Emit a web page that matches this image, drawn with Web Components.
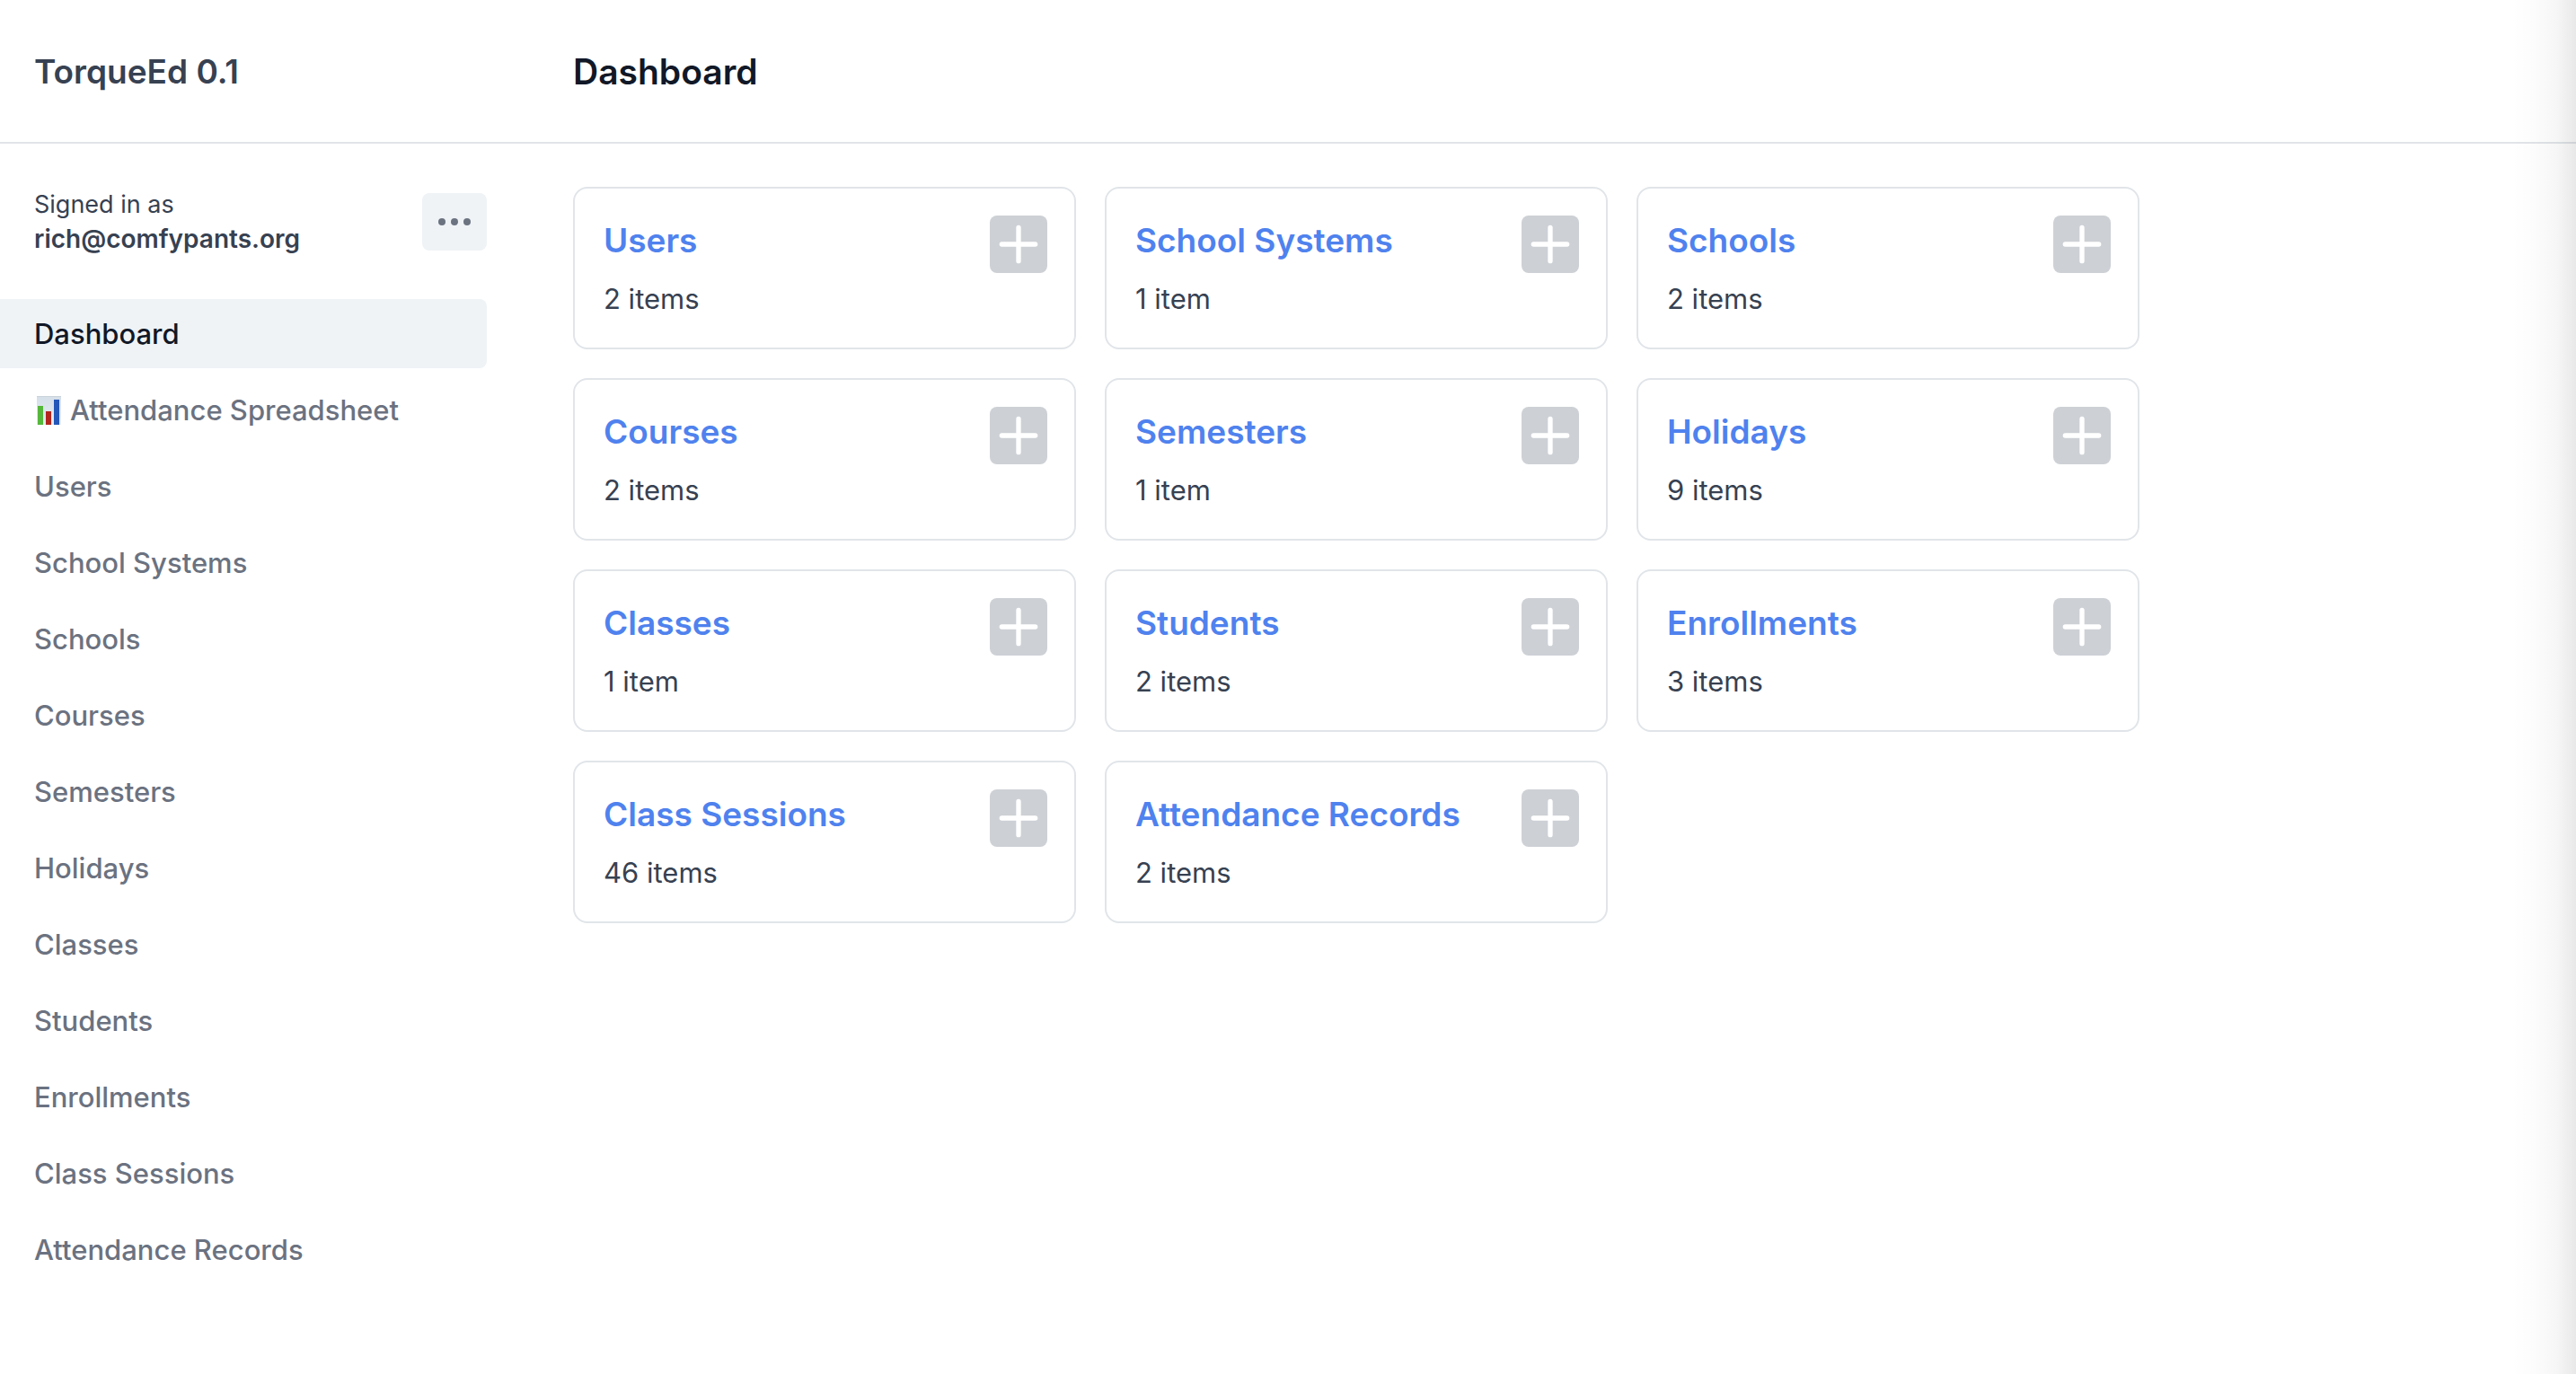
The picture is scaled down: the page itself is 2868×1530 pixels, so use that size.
<!DOCTYPE html>
<html lang="en">
<head>
<meta charset="utf-8">
<title>Dashboard - TorqueEd</title>
<style>
html, body { margin: 0; min-height: 100%; }
body {
  --border: #e1e5e9;
  --tone: #eff3f6;
  --strong: #111827;
  --text: #374151;
  --dim: #6b7280;
  --link: #4f82ee;
  --plus: #cdd0d5;
  background: #fff;
  color: var(--text);
  font: 400 31px/45px Inter, "Liberation Sans", sans-serif;
}
</style>
</head>
<body>
<admin-shell>
  <span slot="brand">TorqueEd 0.1</span>
  <h1 slot="title">Dashboard</h1>
  <signed-in slot="side" email="rich@comfypants.org"></signed-in>
  <side-nav slot="side">
    <nav-link current>Dashboard</nav-link>
    <nav-link><chart-icon></chart-icon>Attendance Spreadsheet</nav-link>
    <nav-link>Users</nav-link>
    <nav-link>School Systems</nav-link>
    <nav-link>Schools</nav-link>
    <nav-link>Courses</nav-link>
    <nav-link>Semesters</nav-link>
    <nav-link>Holidays</nav-link>
    <nav-link>Classes</nav-link>
    <nav-link>Students</nav-link>
    <nav-link>Enrollments</nav-link>
    <nav-link>Class Sessions</nav-link>
    <nav-link>Attendance Records</nav-link>
  </side-nav>
  <card-grid>
    <list-card name="Users">2 items</list-card>
    <list-card name="School Systems">1 item</list-card>
    <list-card name="Schools">2 items</list-card>
    <list-card name="Courses">2 items</list-card>
    <list-card name="Semesters">1 item</list-card>
    <list-card name="Holidays">9 items</list-card>
    <list-card name="Classes">1 item</list-card>
    <list-card name="Students">2 items</list-card>
    <list-card name="Enrollments">3 items</list-card>
    <list-card name="Class Sessions">46 items</list-card>
    <list-card name="Attendance Records">2 items</list-card>
  </card-grid>
</admin-shell>
<script>
const define = (name, html) => customElements.define(name, class extends HTMLElement {
  constructor() {
    super();
    this.attachShadow({ mode: "open" }).innerHTML = html;
  }
  connectedCallback() {
    for (const el of this.shadowRoot.querySelectorAll("[data-text]"))
      el.textContent = this.getAttribute(el.dataset.text);
    for (const el of this.shadowRoot.querySelectorAll("[data-label]"))
      el.setAttribute("aria-label", (el.dataset.label + " " + (this.getAttribute("name") || "")).trim());
    if (this.hasAttribute("current"))
      this.shadowRoot.querySelector("a").setAttribute("aria-current", "page");
  }
});

define("admin-shell", `
<style>
:host { display: flex; flex-direction: column; min-height: 100vh; }
header { display: flex; align-items: center; height: 158px; border-bottom: 2px solid var(--border); }
.brand { flex: 0 0 600px; box-sizing: border-box; padding-left: 38px; font-size: 37px; font-weight: 600; }
.title { flex: 1; padding-left: 38px; }
::slotted(h1) { margin: 0; color: var(--strong); font-size: 39px; font-weight: 600; line-height: 53px; }
.body { display: flex; flex: 1; }
aside { flex: 0 0 542px; margin-right: 58px; }
main { flex: 1; min-width: 0; padding: 48px 38px; }
.edge { position: absolute; top: 0; right: 0; bottom: 0; width: 72px; pointer-events: none;
  background: linear-gradient(to right, rgba(0,0,0,0), rgba(0,0,0,.012) 35%, rgba(0,0,0,.035) 70%, rgba(0,0,0,.09)); }
</style>
<header><div class="brand"><slot name="brand"></slot></div><div class="title"><slot name="title"></slot></div></header>
<div class="body"><aside><slot name="side"></slot></aside><main><slot></slot></main></div>
<div class="edge"></div>`);

define("signed-in", `
<style>
:host { display: flex; align-items: center; justify-content: space-between; padding: 48px 0 47px 38px; font-size: 27px; line-height: 39px; }
strong { display: block; font-size: 28px; font-weight: 600; }
button { display: flex; align-items: center; justify-content: center; width: 72px; height: 64px; padding: 0; border: 0; border-radius: 8px; background: var(--tone); color: var(--dim); }
svg { display: block; }
</style>
<div>Signed in as<strong data-text="email"></strong></div>
<button data-label="Links and signout"><svg width="36" height="8" viewBox="0 0 36 8" fill="currentColor"><circle cx="4" cy="4" r="4"/><circle cx="18" cy="4" r="4"/><circle cx="32" cy="4" r="4"/></svg></button>`);

define("side-nav", `
<style>:host { display: block; } nav { display: flex; flex-direction: column; gap: 8px; }</style>
<nav><slot></slot></nav>`);

define("nav-link", `
<style>
:host { display: block; }
a { display: flex; align-items: center; padding: 16px 38px; border-radius: 0 8px 8px 0; color: var(--dim); font-weight: 500; text-decoration: none; }
:host([current]) a { background: var(--tone); color: var(--strong); }
</style>
<a href="#"><slot></slot></a>`);

define("chart-icon", `
<style>:host { display: block; margin-right: 8px; } svg { display: block; }</style>
<svg width="32" height="32" viewBox="0 0 32 32">
<defs><linearGradient id="p" x2="0" y2="1"><stop stop-color="#d5dfe8"/><stop offset="1" stop-color="#e6ecf2"/></linearGradient></defs>
<rect x="3" y="0" width="27" height="32" fill="url(#p)"/>
<path d="M3 .5H30" stroke="#c9d2da"/>
<rect x="4" y="11" width="6" height="21" fill="#55b73b"/>
<rect x="13" y="17" width="6" height="15" fill="#b3261c"/>
<rect x="22" y="4" width="6" height="28" fill="#2457b8"/>
</svg>`);

define("card-grid", `
<style>:host { display: grid; grid-template-columns: repeat(auto-fill, minmax(480px, 1fr)); gap: 32px; max-width: 1744px; }</style>
<slot></slot>`);

define("list-card", `
<style>
:host { display: flex; align-items: flex-start; justify-content: space-between; box-sizing: border-box; padding: 30px 30px 32px 32px; border: 2px solid var(--border); border-radius: 16px; }
.info { padding-top: 2px; }
h3 { margin: 0 0 16px; font-size: 37px; font-weight: 600; line-height: 52px; }
a { color: var(--link); text-decoration: none; }
button { flex: none; width: 64px; height: 64px; padding: 0; border: 0; border-radius: 8px; background: var(--plus); }
svg { display: block; margin: auto; }
</style>
<div class="info"><h3><a href="#" data-text="name"></a></h3><slot></slot></div>
<button data-label="Create"><svg width="44" height="44" viewBox="0 0 44 44" fill="none" stroke="#fff" stroke-width="5.300" stroke-linecap="round"><path d="M22 3.300V40.700M3.300 22H40.700"/></svg></button>`);
</script>
</body>
</html>
